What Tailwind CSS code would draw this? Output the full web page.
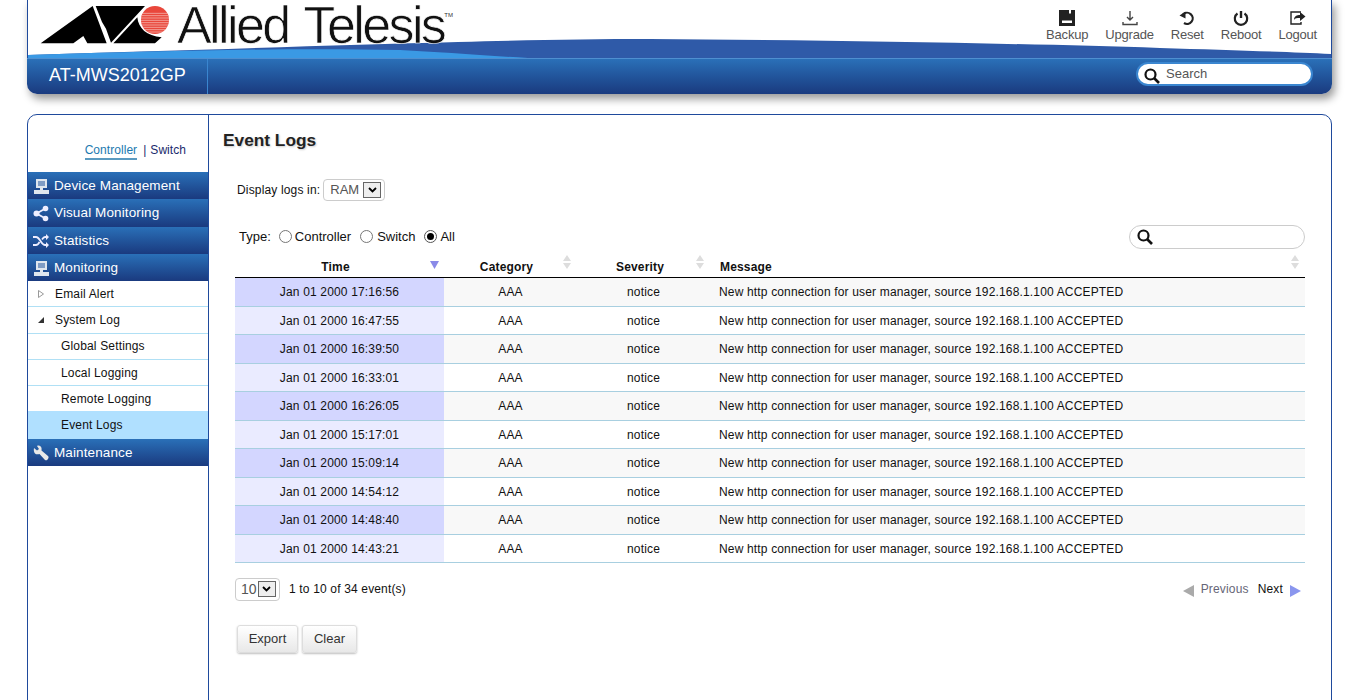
<!DOCTYPE html>
<html lang="en">
<head>
  <meta charset="UTF-8">
  <title>Event Logs</title>
  <script src="https://cdn.jsdelivr.net/npm/@tailwindcss/browser@4"></script>
</head>
<body class="bg-white text-[#111] text-[12px] tracking-[0.16px] font-['Liberation_Sans',Arial,sans-serif] h-[700px] overflow-hidden">
  <div class="mx-[27px]">
    <!-- header -->
    <header class="relative h-[94px] rounded-b-[10px] shadow-[3px_5px_8px_rgba(0,0,0,0.4)]">
      <div class="h-[58px] border-x border-[#1f4a9c] bg-white relative">
        <svg class="absolute left-0 top-0 w-[1303px] h-[58px]" viewBox="0 0 1303 58" preserveAspectRatio="none">
          <path d="M0 55 C60 53 130 51 200 49 C280 46 360 44 430 42 C500 40 560 39 622 39 C780 40 980 43 1132 48 C1200 50 1260 52 1303 54 L1303 58 L0 58Z" fill="#2f5aa8"/>
          <path d="M0 55 C60 53 130 51 200 50 C260 49 320 49 372 50 C410 52 450 55 500 58 L0 58Z" fill="#3a99e4"/>
        </svg>
        <!-- logo -->
        <svg class="absolute left-[2px] top-0" width="150" height="50" viewBox="0 0 450 150">
          <defs><clipPath id="disc"><circle cx="375" cy="60" r="42"/></clipPath></defs>
          <path d="M32 130L188 18L230 130L172 130L160 108L130 130Z" fill="#000"/>
          <path d="M197 18L345 18L243 128L228 86L216 66Z" fill="#000"/>
          <path d="M250 130L322 52C325 85 350 108 395 112L375 130Z" fill="#000"/>
          <circle cx="375" cy="60" r="42" fill="#e9473b"/>
          <g clip-path="url(#disc)" stroke="#f7c9c3" stroke-width="2">
            <path d="M330 40H420M330 47H420M330 54H420M330 61H420M330 68H420M330 75H420M330 82H420M330 89H420M330 96H420"/>
          </g>
        </svg>
        <div class="absolute left-[149px] top-0 flex items-start">
          <span class="text-[52px] leading-[50px] text-[#111] tracking-[-2.6px] [word-spacing:4px] whitespace-nowrap [-webkit-text-stroke:0.7px_white]">Allied Telesis</span>
          <span class="text-[6px] leading-none mt-[12px] text-[#333]">TM</span>
        </div>
        <!-- actions -->
        <nav class="absolute right-[14px] top-[10px] flex gap-[17px] text-[#555] text-[13px] leading-[16px] tracking-[-0.2px]">
          <div class="flex flex-col items-center">
            <svg width="16" height="16" viewBox="0 0 16 16" class="mb-[1px]"><path d="M0 0H16V16H0Z" fill="#222"/><path d="M10 0H12V3.5H10Z" fill="#fff"/><path d="M3 10.5H13V13H3Z" fill="#fff"/></svg>
            <span>Backup</span>
          </div>
          <div class="flex flex-col items-center">
            <svg width="16" height="16" viewBox="0 0 16 16" class="mb-[1px]"><path d="M8 1V9M5 7L8 10L11 7" fill="none" stroke="#444" stroke-width="1.4"/><path d="M1 12V14.5H15V12" fill="none" stroke="#444" stroke-width="1.4"/></svg>
            <span>Upgrade</span>
          </div>
          <div class="flex flex-col items-center">
            <svg width="16" height="16" viewBox="0 0 16 16" class="mb-[1px]"><path d="M4 4.5A5.6 5.6 0 1 1 5 13" fill="none" stroke="#222" stroke-width="2.2"/><path d="M0.5 5.5L6.5 1.5V8.5Z" fill="#222"/></svg>
            <span>Reset</span>
          </div>
          <div class="flex flex-col items-center">
            <svg width="16" height="16" viewBox="0 0 16 16" class="mb-[1px]"><path d="M4.5 3.5A6.2 6.2 0 1 0 11.5 3.5" fill="none" stroke="#222" stroke-width="2.2"/><path d="M8 1V8" stroke="#222" stroke-width="2.4"/></svg>
            <span>Reboot</span>
          </div>
          <div class="flex flex-col items-center">
            <svg width="16" height="16" viewBox="0 0 16 16" class="mb-[1px]"><path d="M11 12V14H1V2H11" fill="none" stroke="#222" stroke-width="1.4"/><path d="M4 10C4 6 7 5 10 5V2L15.5 6.5L10 11V8C7 8 5 8 4 10Z" fill="#222"/></svg>
            <span>Logout</span>
          </div>
        </nav>
      </div>
      <div class="h-[36px] rounded-b-[10px] bg-gradient-to-b from-[#2a70b8] to-[#1a3a7f] flex items-stretch border-t border-[#4f8fd0]">
        <div class="w-[181px] border-r border-[#3a86d0] flex items-center pl-[22px] pb-[2px] text-white text-[18px] tracking-normal">AT-MWS2012GP</div>
        <div class="ml-auto mr-[19px] mt-[3px] h-[24px] w-[177px] rounded-full bg-white border-2 border-[#3a86d0] flex items-center pl-[6px] text-[#555] text-[13px] tracking-normal">
          <svg width="16" height="16" viewBox="0 0 16 16" class="mr-[6px] mt-[3px]"><circle cx="6.5" cy="6.5" r="5" fill="none" stroke="#111" stroke-width="2.2"/><path d="M10 10L15 15" stroke="#111" stroke-width="2.6"/></svg>
          <span class="-mt-[1px]">Search</span>
        </div>
      </div>
    </header>

    <!-- body panel -->
    <div class="mt-[20px] h-[600px] border border-[#1f4a9c] rounded-t-[10px] flex">
      <aside class="w-[181px] shrink-0 border-r border-[#1f4a9c]">
        <div class="h-[57px] flex justify-end items-start pt-[28px] pr-[22px] text-[#1a2a6c] tracking-[0.05px]">
          <span class="text-[#1c7ab0] border-b-2 border-[#5a9ac0] leading-[15px] h-[17px]">Controller</span>
          <span class="ml-[6px] mr-[4px] leading-[15px]">|</span>
          <span class="leading-[15px]">Switch</span>
        </div>
        <ul>
          <li class="h-[27px] flex items-center bg-gradient-to-b from-[#2a70b8] to-[#1a3a7f] text-white text-[13.5px] pl-[5px] pt-[1px] tracking-[0.12px]">
            <svg width="17" height="17" viewBox="0 0 17 17" class="mr-[4px]"><path d="M3 1H14V10H3Z" fill="#dfe6ee"/><path d="M5 3H12V8H5Z" fill="#7f9cc4"/><path d="M7 10H10V12H7Z M1 12H16V16H1Z" fill="#dfe6ee"/></svg>Device Management</li>
          <li class="h-[28px] flex items-center bg-gradient-to-b from-[#2a70b8] to-[#1a3a7f] text-white text-[13.5px] pl-[5px] tracking-[0.12px]">
            <svg width="16" height="17" viewBox="0 0 16 17" class="mr-[5px]"><path d="M12.5 3.5L3.5 8.5L12.5 13.5" fill="none" stroke="#eef" stroke-width="1.8"/><circle cx="12.5" cy="3.5" r="2.8" fill="#eef"/><circle cx="3.5" cy="8.5" r="3" fill="#eef"/><circle cx="12.5" cy="13.5" r="2.8" fill="#eef"/></svg>Visual Monitoring</li>
          <li class="h-[27px] flex items-center bg-gradient-to-b from-[#2a70b8] to-[#1a3a7f] text-white text-[13.5px] pl-[5px] pt-[1px] tracking-[0.12px]">
            <svg width="16" height="14" viewBox="0 0 16 14" class="mr-[5px]"><path d="M0 3H3C7 3 8 11 12 11H14M0 11H3C5 11 6 9 6.5 8M9 5.5C10 4 11 3 12 3H14" fill="none" stroke="#eef" stroke-width="1.8"/><path d="M13 0L16 3L13 6ZM13 8L16 11L13 14Z" fill="#eef"/></svg>Statistics</li>
          <li class="h-[27px] flex items-center bg-gradient-to-b from-[#2a70b8] to-[#1a3a7f] text-white text-[13.5px] pl-[5px] pt-[1px] tracking-[0.12px]">
            <svg width="17" height="17" viewBox="0 0 17 17" class="mr-[4px]"><path d="M3 1H14V10H3Z" fill="#dfe6ee"/><path d="M5 3H12V8H5Z" fill="#7f9cc4"/><path d="M7 10H10V12H7Z M1 12H16V16H1Z" fill="#dfe6ee"/></svg>Monitoring</li>
          <li class="h-[26px] flex items-center border-b border-[#b0e0f5] pl-[10px]">
            <svg width="6" height="8" viewBox="0 0 6 8" class="mr-[11px]"><path d="M.5 .5L5.5 4L.5 7.5Z" fill="#fff" stroke="#999"/></svg>Email Alert</li>
          <li class="h-[27px] flex items-center border-b border-[#b0e0f5] pl-[10px]">
            <svg width="6" height="6" viewBox="0 0 6 6" class="mr-[11px]"><path d="M6 0V6H0Z" fill="#333"/></svg>System Log</li>
          <li class="h-[26px] flex items-center border-b border-[#b0e0f5] pl-[33px] pb-[2px]">Global Settings</li>
          <li class="h-[26px] flex items-center border-b border-[#b0e0f5] pl-[33px]">Local Logging</li>
          <li class="h-[25px] flex items-center pl-[33px]">Remote Logging</li>
          <li class="h-[28px] flex items-center bg-[#b0e0ff] pl-[33px]">Event Logs</li>
          <li class="h-[27px] flex items-center bg-gradient-to-b from-[#2a70b8] to-[#1a3a7f] text-white text-[13.5px] pl-[5px] pt-[1px] tracking-[0.12px]">
            <svg width="16" height="16" viewBox="0 0 16 16" class="mr-[5px]"><path d="M1 3L4 5.5L6 4L4 1C6 0 8 1 8.5 3C8.7 4 8.5 5 8.5 5.5L15 11C16 12 15.5 13 15 14C14 15.5 13 15.5 12 15L6.5 9C5 9.5 3 9.5 2 8.5C1 7.5 .5 5 1 3Z" fill="#e8e8e8"/></svg>Maintenance</li>
        </ul>
      </aside>

      <main class="flex-1 pl-[26px] pr-[26px] min-w-0">
        <h1 class="text-[17.3px] font-bold text-[#222] tracking-normal leading-[20px] mt-[15px] -ml-[12px] [text-shadow:1px_1px_2px_rgba(0,0,0,0.2)]">Event Logs</h1>
        <div class="flex items-center mt-[29px] ml-[2px] h-[22px]">
          <span>Display logs in:</span>
          <div class="ml-[3px] h-[22px] w-[62px] border border-[#ccc] rounded-[4px] flex items-center pl-[6px] text-[#555] text-[13px] tracking-normal">RAM
            <span class="ml-[4px] w-[18px] h-[16px] border border-[#666] bg-[#eee] flex items-center justify-center">
              <svg width="9" height="6" viewBox="0 0 9 6"><path d="M1 1L4.5 4.5L8 1" fill="none" stroke="#000" stroke-width="1.8"/></svg>
            </span>
          </div>
        </div>
        <div class="flex items-center justify-between mt-[23px] h-[25px] ml-[4px] text-[13px] tracking-normal">
          <div class="flex items-center">
            <span class="mr-[8px]">Type:</span>
            <span class="w-[13px] h-[13px] rounded-full border border-[#777] mr-[3px]"></span><span class="mr-[9px]">Controller</span>
            <span class="w-[13px] h-[13px] rounded-full border border-[#777] mr-[4px]"></span><span class="mr-[9px]">Switch</span>
            <span class="w-[13px] h-[13px] rounded-full border border-[#555] mr-[3px] flex items-center justify-center"><span class="w-[7px] h-[7px] rounded-full bg-black"></span></span><span>All</span>
          </div>
          <div class="w-[176px] h-[24px] rounded-full border border-[#ccc] flex items-center pl-[7px]">
            <svg width="16" height="16" viewBox="0 0 16 16"><circle cx="6.5" cy="6.5" r="5" fill="none" stroke="#111" stroke-width="2.2"/><path d="M10 10L15 15" stroke="#111" stroke-width="2.6"/></svg>
          </div>
        </div>

        <table id="logs" class="w-[1070px] table-fixed border-collapse mt-[6px]">
          <thead>
            <tr class="h-[22px] border-b border-black font-bold">
              <th class="w-[209px] relative pr-[8px] pt-[3px]">Time<svg class="absolute right-[5px] top-[6px]" width="9" height="8" viewBox="0 0 9 8"><path d="M0 0H9L4.5 8Z" fill="#8a8ae8"/></svg></th>
              <th class="w-[133px] relative pr-[8px] pt-[3px]">Category<svg class="absolute right-[6px] top-[0px]" width="8" height="14" viewBox="0 0 8 14"><path d="M4 0L8 6H0ZM0 8H8L4 14Z" fill="#ddd"/></svg></th>
              <th class="w-[133px] relative pr-[7px] pt-[3px]">Severity<svg class="absolute right-[6px] top-[0px]" width="8" height="14" viewBox="0 0 8 14"><path d="M4 0L8 6H0ZM0 8H8L4 14Z" fill="#ddd"/></svg></th>
              <th class="relative text-left pl-[10px] pt-[3px]">Message<svg class="absolute right-[6px] top-[0px]" width="8" height="14" viewBox="0 0 8 14"><path d="M4 0L8 6H0ZM0 8H8L4 14Z" fill="#ddd"/></svg></th>
            </tr>
          </thead>
          <tbody id="rows"></tbody>
        </table>

        <div class="flex items-center justify-between mt-[15px] h-[23px]">
          <div class="flex items-center">
            <div class="h-[23px] w-[45px] border border-[#ccc] rounded-[4px] flex items-center pl-[5px] text-[#555] text-[14px] tracking-normal">10
              <span class="ml-[1px] w-[18px] h-[16px] border border-[#666] bg-[#eee] flex items-center justify-center">
                <svg width="9" height="6" viewBox="0 0 9 6"><path d="M1 1L4.5 4.5L8 1" fill="none" stroke="#000" stroke-width="1.8"/></svg>
              </span>
            </div>
            <span class="ml-[9px] -mt-[1px]">1 to 10 of 34 event(s)</span>
          </div>
          <div class="flex items-center mr-[4px]">
            <svg width="11" height="12" viewBox="0 0 11 12" class="mt-[4px]"><path d="M11 0V12L0 6Z" fill="#aaa"/></svg>
            <span class="ml-[7px] -mt-[1px] text-[#667]">Previous</span>
            <span class="ml-[9px] -mt-[1px]">Next</span>
            <svg width="11" height="12" viewBox="0 0 11 12" class="ml-[7px] mt-[4px]"><path d="M0 0V12L11 6Z" fill="#8a96ee"/></svg>
          </div>
        </div>

        <div class="flex mt-[24px] ml-[2px] gap-[4px] text-[13px] tracking-normal text-[#333]">
          <button class="w-[61px] h-[28px] rounded-[3px] border border-[#ddd] bg-gradient-to-b from-white to-[#e8e8e8] shadow-[0_1px_2px_rgba(0,0,0,0.25)]">Export</button>
          <button class="w-[55px] h-[28px] rounded-[3px] border border-[#ddd] bg-gradient-to-b from-white to-[#e8e8e8] shadow-[0_1px_2px_rgba(0,0,0,0.25)]">Clear</button>
        </div>
      </main>
    </div>
  </div>

  <script>
    const times = ['17:16:56', '16:47:55', '16:39:50', '16:33:01', '16:26:05', '15:17:01', '15:09:14', '14:54:12', '14:48:40', '14:43:21'];
    const rows = document.getElementById('rows');
    times.forEach((t, i) => {
      const tr = document.createElement('tr');
      tr.className = 'border-b border-[#a8cfe0] ' + (i % 2 ? 'h-[28px] bg-white' : 'h-[29px] bg-[#f8f8f8]');
      tr.innerHTML = `
        <td class="text-center pt-[1px] ${i % 2 ? 'bg-[#eaebff]' : 'bg-[#d3d6ff]'}">Jan 01 2000 ${t}</td>
        <td class="text-center pt-[1px]">AAA</td>
        <td class="text-center pt-[1px]">notice</td>
        <td class="pl-[9px] pt-[1px] whitespace-nowrap">New http connection for user manager, source 192.168.1.100 ACCEPTED</td>
      `;
      rows.appendChild(tr);
    });
  </script>
</body>
</html>
